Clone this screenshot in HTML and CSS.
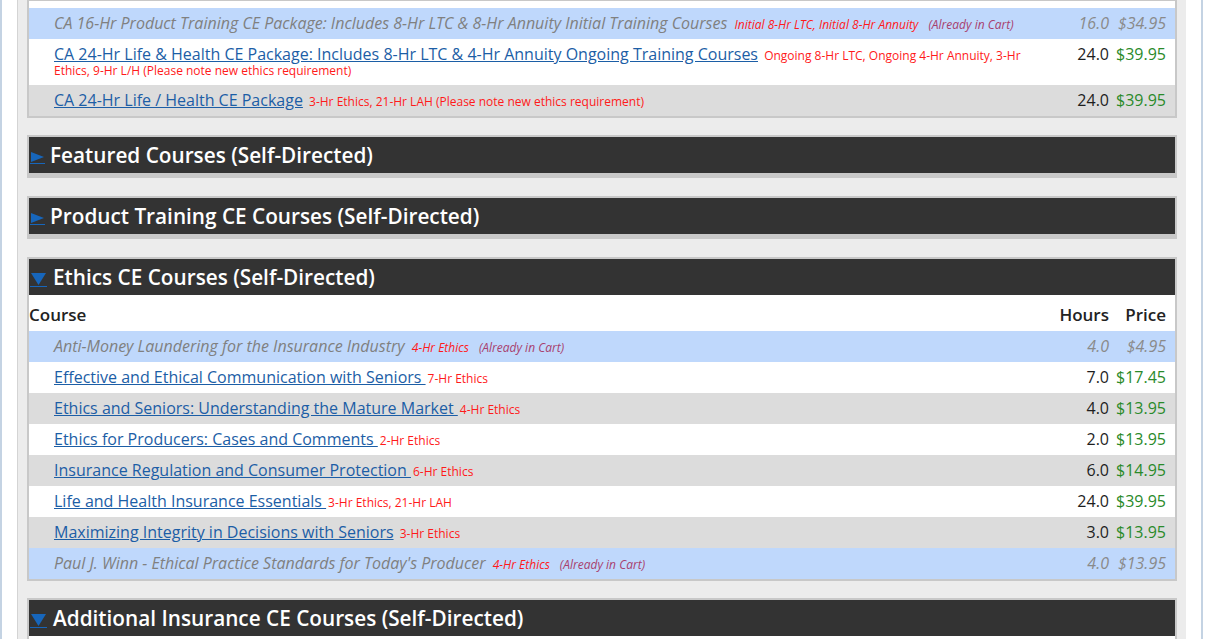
FILE: index.html
```html
<!DOCTYPE html>
<html lang="en">
<head>
<meta charset="utf-8">
<title>CE Courses</title>
<link rel="stylesheet" href="styles.css">
</head>
<body>
<div class="frame">
  <div class="inner">

    <div class="panel panel-top">
      <div class="top-gap"></div>
      <table class="courses">
        <colgroup><col class="c-course"><col class="c-hours"><col class="c-price"></colgroup>
        <tbody>
          <tr class="row incart">
            <td class="course"><span class="title">CA 16-Hr Product Training CE Package: Includes 8-Hr LTC &amp; 8-Hr Annuity Initial Training Courses</span> <span class="tag">Initial 8-Hr LTC, Initial 8-Hr Annuity</span><span class="cart">(Already in Cart)</span></td>
            <td class="hours">16.0</td>
            <td class="price">$34.95</td>
          </tr>
          <tr class="row white">
            <td class="course"><a class="title" href="#">CA 24-Hr Life &amp; Health CE Package: Includes 8-Hr LTC &amp; 4-Hr Annuity Ongoing Training Courses</a> <span class="tag">Ongoing 8-Hr LTC, Ongoing 4-Hr Annuity, 3-Hr Ethics, 9-Hr L/H (Please note new ethics requirement)</span></td>
            <td class="hours">24.0</td>
            <td class="price">$39.95</td>
          </tr>
          <tr class="row gray">
            <td class="course"><a class="title" href="#">CA 24-Hr Life / Health CE Package</a> <span class="tag">3-Hr Ethics, 21-Hr LAH (Please note new ethics requirement)</span></td>
            <td class="hours">24.0</td>
            <td class="price">$39.95</td>
          </tr>
        </tbody>
      </table>
    </div>

    <div class="panel collapsed">
      <h3 class="panel-head"><a class="toggle" href="#"><svg class="arr-right" width="13" height="10" viewBox="0 0 13 10"><polygon points="0,0 13,5 0,10" fill="#1766bb"/></svg></a><span>Featured Courses (Self-Directed)</span></h3>
    </div>

    <div class="panel collapsed">
      <h3 class="panel-head"><a class="toggle" href="#"><svg class="arr-right" width="13" height="10" viewBox="0 0 13 10"><polygon points="0,0 13,5 0,10" fill="#1766bb"/></svg></a><span>Product Training CE Courses (Self-Directed)</span></h3>
    </div>

    <div class="panel">
      <h3 class="panel-head"><a class="toggle down" href="#"><svg class="arr-down" width="15" height="12" viewBox="0 0 15 12"><polygon points="0,0 15,0 7.5,12" fill="#1766bb"/></svg></a><span class="down-text">Ethics CE Courses (Self-Directed)</span></h3>
      <table class="courses">
        <colgroup><col class="c-course"><col class="c-hours"><col class="c-price"></colgroup>
        <thead>
          <tr class="head">
            <th class="h-course">Course</th>
            <th class="h-hours">Hours</th>
            <th class="h-price">Price</th>
          </tr>
        </thead>
        <tbody>
          <tr class="row incart">
            <td class="course"><span class="title">Anti-Money Laundering for the Insurance Industry</span> <span class="tag">4-Hr Ethics</span><span class="cart">(Already in Cart)</span></td>
            <td class="hours">4.0</td>
            <td class="price">$4.95</td>
          </tr>
          <tr class="row white">
            <td class="course"><a class="title" href="#">Effective and Ethical Communication with Seniors </a> <span class="tag">7-Hr Ethics</span></td>
            <td class="hours">7.0</td>
            <td class="price">$17.45</td>
          </tr>
          <tr class="row gray">
            <td class="course"><a class="title" href="#">Ethics and Seniors: Understanding the Mature Market </a> <span class="tag">4-Hr Ethics</span></td>
            <td class="hours">4.0</td>
            <td class="price">$13.95</td>
          </tr>
          <tr class="row white">
            <td class="course"><a class="title" href="#">Ethics for Producers: Cases and Comments </a> <span class="tag">2-Hr Ethics</span></td>
            <td class="hours">2.0</td>
            <td class="price">$13.95</td>
          </tr>
          <tr class="row gray">
            <td class="course"><a class="title" href="#">Insurance Regulation and Consumer Protection </a> <span class="tag">6-Hr Ethics</span></td>
            <td class="hours">6.0</td>
            <td class="price">$14.95</td>
          </tr>
          <tr class="row white">
            <td class="course"><a class="title" href="#">Life and Health Insurance Essentials </a> <span class="tag">3-Hr Ethics, 21-Hr LAH</span></td>
            <td class="hours">24.0</td>
            <td class="price">$39.95</td>
          </tr>
          <tr class="row gray">
            <td class="course"><a class="title" href="#">Maximizing Integrity in Decisions with Seniors</a> <span class="tag">3-Hr Ethics</span></td>
            <td class="hours">3.0</td>
            <td class="price">$13.95</td>
          </tr>
          <tr class="row incart">
            <td class="course"><span class="title">Paul J. Winn - Ethical Practice Standards for Today's Producer</span> <span class="tag">4-Hr Ethics</span><span class="cart">(Already in Cart)</span></td>
            <td class="hours">4.0</td>
            <td class="price">$13.95</td>
          </tr>
        </tbody>
      </table>
    </div>

    <div class="panel">
      <h3 class="panel-head"><a class="toggle down" href="#"><svg class="arr-down" width="15" height="12" viewBox="0 0 15 12"><polygon points="0,0 15,0 7.5,12" fill="#1766bb"/></svg></a><span class="down-text">Additional Insurance CE Courses (Self-Directed)</span></h3>
      <table class="courses">
        <colgroup><col class="c-course"><col class="c-hours"><col class="c-price"></colgroup>
        <thead>
          <tr class="head">
            <th class="h-course">Course</th>
            <th class="h-hours">Hours</th>
            <th class="h-price">Price</th>
          </tr>
        </thead>
      </table>
    </div>

  </div>
</div>
</body>
</html>
```

FILE: styles.css
```css
html, body {
  margin: 0;
  padding: 0;
  background: #ffffff;
}

body {
  font-family: "Open Sans", "Liberation Sans", sans-serif;
  color: #222222;
}

.frame {
  width: 1169px;
  border-left: 2px solid #c4d3e3;
  border-right: 2px solid #c4d3e3;
  padding: 0 15px;
  background: #ffffff;
}

.inner {
  border-left: 1px solid #d4d4d4;
  background: #ececec;
  padding: 0 9px;
}

.panel {
  border: 2px solid #c8c8c8;
  background: #c8c8c8;
  margin-bottom: 17px;
}

.panel-top {
  border-top-width: 1px;
}

.top-gap {
  height: 7px;
  background: #ffffff;
}

.collapsed {
  padding-bottom: 3px;
  margin-bottom: 18px;
}

.panel-head {
  margin: 0;
  height: 36px;
  background: #333333;
  display: flex;
  align-items: flex-start;
  padding-left: 1px;
  color: #ffffff;
  font-size: 20.75px;
  font-weight: 600;
  line-height: 36px;
}

.toggle {
  display: block;
  margin-top: 15px;
  padding: 0 1px 1px 1px;
  border-bottom: 1px solid #1766bb;
  line-height: 0;
  margin-right: 5px;
}

.toggle svg {
  display: block;
}

.toggle.down {
  margin-top: 14px;
  margin-right: 6px;
}

.courses {
  width: 100%;
  border-collapse: collapse;
  table-layout: fixed;
  background: #ffffff;
}

.c-course { width: auto; }
.c-hours { width: 80px; }
.c-price { width: 66px; }

.head {
  height: 36px;
}

.head th {
  padding: 12px 0 9px 0;
  font-size: 17px;
  font-weight: 600;
  line-height: 15px;
  color: #222222;
  vertical-align: top;
}

.h-course { text-align: left; }
.h-hours { text-align: right; }
.h-price { text-align: right; padding-right: 9px !important; }

.row {
  height: 31px;
}

.row td {
  padding: 8px 0 8px 0;
  line-height: 15px;
  vertical-align: top;
  font-size: 16px;
}

.row.white { background: #ffffff; }
.row.gray { background: #dcdcdc; }
.row.incart { background: #bfd8fc; }

.course {
  padding-left: 25px !important;
}

.title {
  font-size: 16px;
  color: #1c5ea6;
  text-decoration: underline;
}

.tag {
  font-size: 12px;
  line-height: 12px;
  color: #ff1a1a;
  margin-left: 2px;
}

.cart {
  font-size: 12px;
  line-height: 12px;
  font-style: italic;
  color: #a8406e;
  margin-left: 10px;
}

.incart .title {
  color: #808080;
  font-style: italic;
  text-decoration: none;
}

.incart .tag {
  font-style: italic;
  margin-left: 3px;
}

.hours {
  text-align: right;
  color: #1e1e1e;
}

.price {
  text-align: right;
  color: #2a8a2a;
  padding-right: 9px !important;
}

.incart .hours,
.incart .price {
  color: #8a8a8a;
  font-style: italic;
}
```
